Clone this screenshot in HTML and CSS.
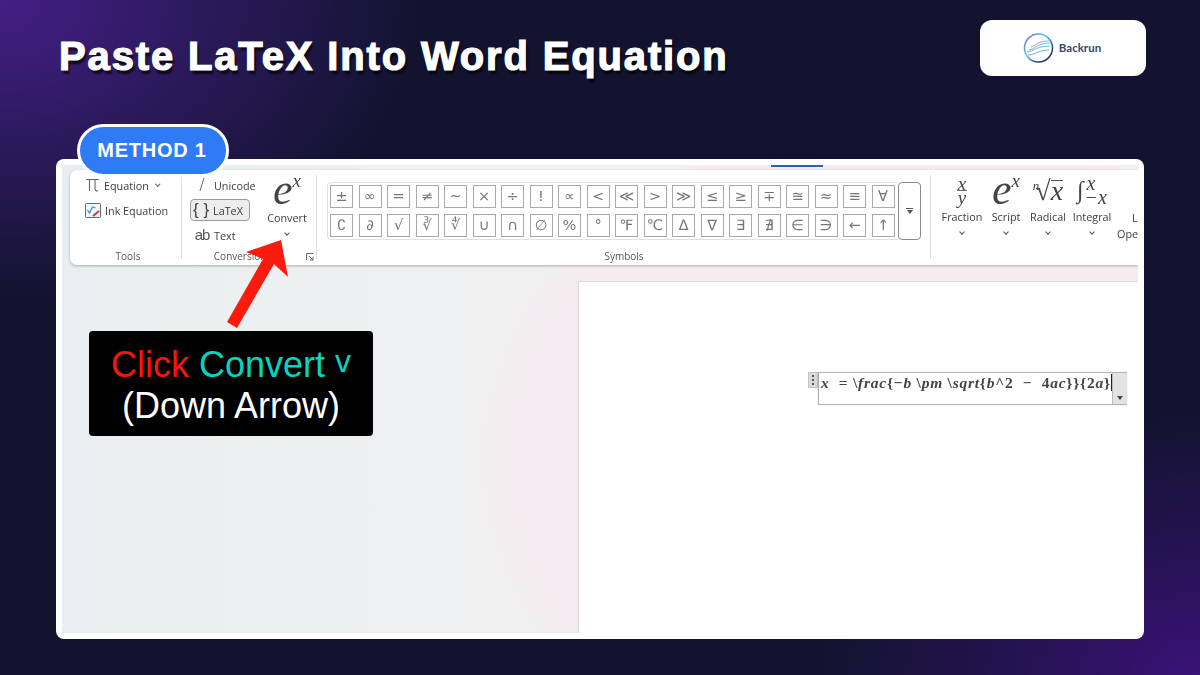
FILE: index.html
```html
<!DOCTYPE html>
<html lang="en">
<head>
<meta charset="utf-8">
<title>Paste LaTeX Into Word Equation</title>
<link rel="stylesheet" href="styles.css">
</head>
<body>
<div class="slide">
  <header class="top">
    <h1 class="title">Paste LaTeX Into Word Equation</h1>
    <div class="logo">
      <svg class="logo-mark" width="34" height="34" viewBox="0 0 34 34" fill="none">
        <defs>
          <linearGradient id="ring" x1="0" y1="0" x2="1" y2="1">
            <stop offset="0" stop-color="#8a4fe0"/><stop offset=".42" stop-color="#4fd0ee"/><stop offset=".75" stop-color="#2b3a70"/><stop offset="1" stop-color="#26305f"/>
          </linearGradient>
          <linearGradient id="wave" x1="0" y1="0" x2="1" y2="0">
            <stop offset="0" stop-color="#8d9ad8"/><stop offset="1" stop-color="#5cc6ee"/>
          </linearGradient>
        </defs>
        <circle cx="16.5" cy="17" r="14" stroke="url(#ring)" stroke-width="1.5"/>
        <path d="M7 19c6-1 8-5 13-6 3-.6 6-1 9-1M5 21c7-1 9-4 14-5 3-.6 6-1 9-1M6 24c6 0 9-3 13-4 3-.7 5-1 8-1M9 16c4-1 6-4 10-5 2-.5 5-1 8-1" stroke="url(#wave)" stroke-width="1"/>
      </svg>
      <span class="logo-name">Backrun</span>
    </div>
  </header>

  <main class="card">
    <div class="pill">METHOD 1</div>
    <div class="screen">
      <div class="tab-mark"></div>
      <section class="ribbon">
        <div class="group tools">
          <div class="group-body tools-body">
            <div class="tool-row">
              <svg class="pi" width="15" height="14" viewBox="0 0 15 14" fill="none" stroke="#666" stroke-width="1.1"><path d="M1 1.5h13M4.5 1.5V13M10 1.5v9.5c0 1.4.8 2 3 2"/></svg>
              <span>Equation</span><span class="chev small"></span>
            </div>
            <div class="tool-row">
              <svg width="16" height="15" viewBox="0 0 16 15" fill="none"><rect x=".5" y=".5" width="15" height="14" rx="1" fill="#eef5fb" stroke="#5a6a78"/><path d="M2.5 7l2 3 3-6 3 1" stroke="#3f8fd8" stroke-width="1.2"/><path d="M8 13l6-5" stroke="#d8403a" stroke-width="2.2"/></svg>
              <span>Ink Equation</span>
            </div>
          </div>
          <div class="group-label">Tools</div>
        </div>

        <div class="group conv">
          <div class="group-body conv-body">
            <div class="conv-list">
              <div class="conv-row"><span class="conv-ico slash">/</span><span>Unicode</span></div>
              <div class="conv-row active"><span class="conv-ico brace">{ }</span><span>LaTeX</span></div>
              <div class="conv-row"><span class="conv-ico ab">ab</span><span>Text</span></div>
            </div>
            <div class="big-btn convert">
              <span class="ex"><i>e</i><sup>x</sup></span>
              <span class="btn-label">Convert</span>
              <span class="chev"></span>
            </div>
          </div>
          <div class="group-label conv-label">Conversions</div>
          <svg class="launcher" width="8" height="8" viewBox="0 0 8 8" fill="none" stroke="#666"><path d="M.5 7V.5H7M3 3l4 4M7 4v3H4"/></svg>
        </div>

        <div class="group symbols">
          <div class="group-body sym-body">
            <div class="sym-grid">
              <span>±</span><span>∞</span><span>=</span><span>≠</span><span>~</span><span>×</span><span>÷</span><span>!</span><span>∝</span><span>&lt;</span><span>≪</span><span>&gt;</span><span>≫</span><span>≤</span><span>≥</span><span>∓</span><span>≅</span><span>≈</span><span>≡</span><span>∀</span>
              <span>∁</span><span>∂</span><span>√</span><span>∛</span><span>∜</span><span>∪</span><span>∩</span><span>∅</span><span>%</span><span>°</span><span>℉</span><span>℃</span><span>∆</span><span>∇</span><span>∃</span><span>∄</span><span>∈</span><span>∋</span><span>←</span><span>↑</span>
            </div>
            <div class="sym-more"><span class="more-bar"></span><span class="more-tri"></span></div>
          </div>
          <div class="group-label">Symbols</div>
        </div>

        <div class="group structs">
          <div class="struct">
            <span class="s-ico frac"><i>x</i><i class="den">y</i></span>
            <span class="btn-label">Fraction</span><span class="chev"></span>
          </div>
          <div class="struct">
            <span class="s-ico ex"><i>e</i><sup>x</sup></span>
            <span class="btn-label">Script</span><span class="chev"></span>
          </div>
          <div class="struct st-radical">
            <span class="s-ico rad"><sup>n</sup>√<i class="over">x</i></span>
            <span class="btn-label">Radical</span><span class="chev"></span>
          </div>
          <div class="struct st-integral">
            <span class="s-ico integ"><span class="int">∫</span><span class="limits"><i class="lim-top">x</i><i>−x</i></span></span>
            <span class="btn-label">Integral</span><span class="chev"></span>
          </div>
          <div class="struct large">
            <span class="s-ico"></span>
            <span class="large-label"><span class="large-word">Large</span><br>Operator</span>
          </div>
        </div>
      </section>

      <div class="workspace">
        <div class="side">
          <div class="callout">
            <div class="callout-line"><span class="red">Click</span> <span class="teal">Convert <span class="vee">v</span></span></div>
            <div class="callout-line">(Down Arrow)</div>
          </div>
        </div>
        <div class="page">
          <div class="eq-wrap">
            <div class="eq-handle"><b></b><b></b><b></b></div>
            <div class="eq-box">
              <div class="eq-text"><i>x</i>&nbsp; = \<i>frac</i>{−<i>b</i> \<i>pm</i> \<i>sqrt</i>{<i>b</i>^2 &nbsp;− &nbsp;4<i>ac</i>}}{2<i>a</i>}<span class="caret"></span></div>
              <div class="eq-side"><span></span></div>
            </div>
          </div>
        </div>
      </div>

      <svg class="arrow" width="80" height="100" viewBox="220 235 80 100">
        <polygon points="227,322 237,328 274,264 288,277 281,240 246,252 263,259" fill="#fb1a0e"/>
      </svg>
    </div>
  </main>
</div>
</body>
</html>
```
FILE: styles.css
```css
* { box-sizing: border-box; }
html, body { margin: 0; height: 100%; }
body { width: 1200px; height: 675px; overflow: hidden; font-family: "Open Sans", "Noto Sans", sans-serif; }

.slide {
  width: 1200px; height: 675px; overflow: hidden; display: flex; flex-direction: column;
  background:
    radial-gradient(420px 300px at 0 0, #431f85 0%, rgba(67,31,133,.55) 45%, rgba(67,31,133,0) 100%),
    radial-gradient(380px 260px at 100% 100%, #3a1278 0%, rgba(58,18,120,.5) 45%, rgba(58,18,120,0) 100%),
    #131330;
}

.top { height: 159px; flex: none; display: flex; justify-content: space-between; align-items: flex-start; padding: 20px 54px 0 59px; }
.title {
  margin: 12px 0 0; font: 700 40px/1.2 "Liberation Sans", Arial, sans-serif; color: #fff;
  letter-spacing: 1.85px; text-shadow: 2px 4px 2px rgba(0,0,0,.7); white-space: nowrap;
  -webkit-text-stroke: 1.2px #fff;
}
.logo { width: 166px; height: 56px; background: #fff; border-radius: 12px; display: flex; align-items: center; justify-content: center; gap: 3px; padding-right: 3px; }
.logo-mark { flex: none; filter: blur(.3px); }
.logo-name { font: 700 11.5px/1 "Lato", "Open Sans", sans-serif; color: #3a4672; }

.card { width: 1088px; height: 480px; margin-left: 56px; padding: 6px; background: #fff; border-radius: 8px; position: relative; flex: none; }
.pill {
  position: absolute; left: 21px; top: -35px; width: 152px; height: 53px; padding: 0 2px 1px 0; z-index: 3;
  display: flex; align-items: center; justify-content: center;
  background: #2f7bf5; border: 3px solid #fff; border-radius: 27px;
  color: #fff; font: 700 20px/1 "Liberation Sans", Arial, sans-serif; letter-spacing: .75px;
}

.screen {
  position: relative; width: 100%; height: 100%; overflow: hidden; display: flex; flex-direction: column; padding: 5px 0 0 8px;
  background:
    radial-gradient(430px 360px at 838px 295px, #f6ebf0 0, #f6ebf0 88%, rgba(246,235,240,0) 100%),
    linear-gradient(90deg, #e9eef0 0, #ecf0f1 20%, #f0f0f1 40%, #f1eff1 100%);
}
.tab-mark { position: absolute; left: 709px; top: 0; width: 52px; height: 2px; background: #2a5fb5; }

.ribbon {
  height: 95px; flex: none; display: flex; background: #fff; border-radius: 7px 0 0 7px;
  box-shadow: 0 1px 3px rgba(0,0,0,.28); color: #3c3c3c; font-size: 10.8px; filter: blur(.45px);
}
.group { position: relative; display: flex; flex-direction: column; }
.group::after { content: ""; position: absolute; right: 0; top: 5px; bottom: 6px; width: 1px; background: #dcdfe2; }
.group-body { height: 80px; flex: none; }
.group-label { text-align: center; font-size: 10px; line-height: 13px; color: #555; }
.chev { display: block; width: 4px; height: 4px; border-right: 1px solid #555; border-bottom: 1px solid #555; transform: rotate(45deg); }
.chev.small { width: 3.5px; height: 3.5px; margin: -2px 0 0 3px; }

.tools { width: 112px; }
.tools .group-label { padding-left: 4px; }
.tools-body { padding: 6px 0 0 15px; display: flex; flex-direction: column; gap: 7px; }
.tool-row { display: flex; align-items: center; height: 18px; gap: 4px; white-space: nowrap; }
.pi { flex: none; }

.conv { width: 135px; }
.conv-label { padding-right: 14px; }
.conv-body { display: flex; padding: 4px 0 0 8px; }
.conv-list { width: 75px; display: flex; flex-direction: column; gap: 3px; }
.conv-row { display: flex; align-items: center; height: 22px; width: 60px; gap: 4px; padding-left: 3px; border: 1px solid transparent; white-space: nowrap; }
.conv-row.active { background: #eceded; border: 1px solid #9a9a9a; border-radius: 4px; }
.conv-ico { width: 16px; text-align: center; color: #555; flex: none; }
.slash { font: 18px/18px "Liberation Serif", serif; }
.brace { font: 17px/18px "Liberation Sans", sans-serif; color: #444; white-space: nowrap; margin-left: -1px; }
.ab { font: 15px/18px "Liberation Sans", sans-serif; letter-spacing: -1px; }
.big-btn { width: 44px; display: flex; flex-direction: column; align-items: center; padding-top: 1px; }
.ex { font: italic 44px/30px "Liberation Serif", serif; color: #444; display: block; height: 34px; white-space: nowrap; }
.ex i { font-style: italic; }
.ex sup { font-size: 19px; line-height: 0; vertical-align: 17px; }
.btn-label { line-height: 14px; white-space: nowrap; text-align: center; }
.convert .btn-label { margin-top: 2px; }
.convert .chev { margin-top: 6px; }
.launcher { position: absolute; right: 3px; bottom: 4px; }

.symbols { width: 614px; }
.sym-body { display: flex; padding: 12px 0 0 10px; }
.sym-grid { width: 571px; height: 58px; display: grid; grid-template-columns: repeat(20, 23px); grid-template-rows: 23px 23px; column-gap: 5.5px; row-gap: 6px; padding: 2px 0 0 2px; border: 1px solid #dfe1e3; border-right: 0; border-radius: 4px 0 0 4px; }
.sym-grid span { display: flex; align-items: center; justify-content: center; border: 1px solid #a9a9a9; font: 14.5px/1 "DejaVu Sans", sans-serif; color: #757575; }
.sym-more { width: 23px; height: 58px; border: 1px solid #8a8a8a; border-radius: 4px; display: flex; flex-direction: column; align-items: center; justify-content: center; gap: 1px; }
.more-bar { width: 7px; height: 1px; background: #555; }
.more-tri { width: 0; height: 0; border: 3.5px solid transparent; border-top: 4px solid #555; border-bottom: 0; }

.structs { flex: 1; min-width: 0; flex-direction: row; padding: 3px 0 0 9px; overflow: hidden; }
.structs::after { display: none; }
.struct { display: flex; flex-direction: column; align-items: center; width: 44px; flex: none; }
.st-radical { width: 40px; }
.st-integral { width: 48px; }
.s-ico { display: block; height: 35px; color: #444; white-space: nowrap; }
.s-ico i { font-style: italic; }
.struct .btn-label { margin-top: 2px; margin-bottom: 6px; }
.frac { display: flex; flex-direction: column; align-items: center; font: italic 19px/13px "Liberation Serif", serif; padding-top: 4px; }
.frac .den { border-top: 1px solid #666; padding: 0 1px; }
.struct .ex { line-height: 34px; height: 35px; }
.rad { font: 28px/36px "Liberation Serif", serif; }
.rad sup { font: italic 13px/0 "Liberation Serif", serif; vertical-align: 10px; margin-right: -4px; }
.rad .over { border-top: 1px solid #555; line-height: 20px; display: inline-block; }
.integ { display: flex; font: 20px/14px "Liberation Serif", serif; padding-top: 2px; }
.int { font-size: 24px; line-height: 30px; margin-right: 1px; }
.limits { display: flex; flex-direction: column; padding-top: 1px; }
.lim-top { padding-left: 2px; }
.large { width: 60px; align-items: flex-start; padding-left: 1px; }
.large-label { line-height: 16px; white-space: nowrap; margin-top: 2px; }
.large-word { padding-left: 15px; }

.workspace { flex: 1; display: flex; min-height: 0; margin-left: -8px; }
.side { width: 516px; flex: none; padding: 66px 0 0 27px; }
.callout { width: 284px; height: 105px; background: #000; border-radius: 4px; display: flex; flex-direction: column; align-items: center; padding-top: 10px; color: #fff; font: 36px/41px "Liberation Sans", Arial, sans-serif; }
.callout-line { white-space: nowrap; }
.red { color: #f5160c; }
.teal { color: #03d5c2; }
.vee { font-size: 32px; vertical-align: 5px; }

.page { flex: 1; margin-top: 16px; background: #fff; border-left: 1px solid #dcdcdc; border-top: 1px solid #dcdcdc; box-shadow: -1px 0 0 #ebe6ea; display: flex; justify-content: flex-end; padding: 90px 11px 0 0; }
.eq-wrap { display: flex; align-items: flex-start; height: 33px; filter: blur(.3px); }
.eq-handle { width: 10px; height: 16px; background: #d9d9d9; border: 1px solid #c3c3c3; display: flex; flex-direction: column; align-items: center; justify-content: center; gap: 2px; }
.eq-handle b { width: 2px; height: 2px; background: #555; }
.eq-box { width: 309px; height: 33px; border: 1px solid #b5b5b5; border-left-color: #aaa; display: flex; justify-content: space-between; box-shadow: 0 0 1px rgba(0,0,0,.2); }
.eq-text { padding: 1px 0 0 2px; font: bold 15.5px/18px "Liberation Serif", serif; color: #444; white-space: nowrap; letter-spacing: .76px; }
.eq-text i { font-style: italic; }
.caret { display: inline-block; width: 1px; height: 17px; background: #222; vertical-align: top; margin-left: 0; }
.eq-side { width: 15px; flex: none; background: #e3e3e3; border-left: 1px solid #bbb; display: flex; align-items: flex-end; justify-content: center; padding-bottom: 4px; }
.eq-side span { width: 0; height: 0; border: 3.5px solid transparent; border-top: 4px solid #444; border-bottom: 0; }

.arrow { position: absolute; left: 158px; top: 70px; z-index: 2; }
```
